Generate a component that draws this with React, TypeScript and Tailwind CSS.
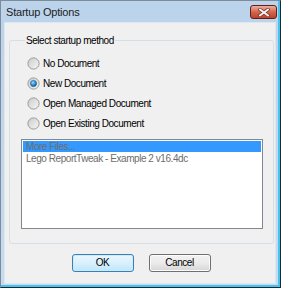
import React from "react";

const ui = "font-['Liberation_Sans',Arial,sans-serif] text-[10px] tracking-[-0.45px]";

function Radio({ checked }: { checked?: boolean }) {
  return (
    <svg width="13" height="13" viewBox="0 0 13 13" className="shrink-0">
      <defs>
        <linearGradient id="rbg" x1="0" y1="0" x2="1" y2="1">
          <stop offset="0" stopColor="#cbcbcb" />
          <stop offset="1" stopColor="#f7f7f7" />
        </linearGradient>
        <radialGradient id="rdot" cx="0.4" cy="0.35" r="0.75">
          <stop offset="0" stopColor="#9bdcff" />
          <stop offset="0.55" stopColor="#2a8bd3" />
          <stop offset="1" stopColor="#0c3d6b" />
        </radialGradient>
      </defs>
      <circle cx="6.5" cy="6.5" r="5.6" fill="url(#rbg)" stroke="#9a9a9a" strokeWidth="1" />
      {checked && <circle cx="6.5" cy="6.5" r="3.1" fill="url(#rdot)" stroke="#1d5a8a" strokeWidth="0.6" />}
    </svg>
  );
}

const options = [
  { label: "No Document" },
  { label: "New Document", checked: true },
  { label: "Open Managed Document" },
  { label: "Open Existing Document" },
];

export default function App() {
  return (
    <div className="w-[281px] h-[288px] border border-l-[#7e8c9a] border-t-[#7e8c9a] border-r-[#1f2830] border-b-[#1f2830]">
      <div className="h-full flex flex-col bg-gradient-to-b from-[#bcd3ec] to-[#c6dbf0] border-r-2 border-b-2 border-[#45c4ef]">
        {/* Title bar */}
        <div className="h-[21px] flex items-start justify-between pl-[5px] pr-[1px]">
          <span className="mt-[5px] text-[11px] leading-[13px] tracking-[-0.2px] text-[#1b1b1b] font-['Liberation_Sans',Arial,sans-serif]">Startup Options</span>
          <div className="mt-[4px] w-[27px] h-[14px] rounded-[3px] border border-[#5c2418] bg-gradient-to-b from-[#eab0a0] via-[#d3654c] to-[#c0432a] flex items-center justify-center">
            <svg width="12" height="9" viewBox="0 0 12 9">
              <path d="M2 1.5 L10 7.5 M10 1.5 L2 7.5" stroke="#7a3326" strokeWidth="3.4" strokeLinecap="square" />
              <path d="M2 1.5 L10 7.5 M10 1.5 L2 7.5" stroke="#f4f4f4" strokeWidth="1.9" strokeLinecap="square" />
            </svg>
          </div>
        </div>

        {/* Client area */}
        <div className={`flex-1 ml-[3px] mr-[2px] mb-[1px] bg-[#f0f0f0] border border-[#dde7f1] flex flex-col ${ui} text-black`}>
          <fieldset className="mt-[11px] ml-[4px] mr-[1px] border border-[#d5dfe5] rounded-[3px] px-[10px] pb-[14px]">
            <legend className="ml-[5px] px-[1px] leading-[13px]">Select startup method</legend>
            <div className="pt-[6px] flex flex-col">
              {options.map((o) => (
                <div key={o.label} className="h-[20px] flex items-center gap-[3px] pl-[7px]">
                  <Radio checked={o.checked} />
                  <span className="leading-[13px]">{o.label}</span>
                </div>
              ))}
            </div>
            <div className="mt-[6px] ml-[1px] h-[90px] bg-white border border-[#828790] p-[1px] text-[#6d6d6d]">
              <div className="h-[11px] bg-[#3399ff] leading-[12px] pl-[3px]">More Files...</div>
              <div className="h-[12px] leading-[13px] pl-[3px]">Lego ReportTweak - Example 2 v16.4dc</div>
            </div>
          </fieldset>

          <div className="mt-[10px] flex justify-center gap-[15px] pl-[2px]">
            <button className="w-[62px] h-[18px] rounded-[3px] border border-[#3c7fb1] bg-gradient-to-b from-[#eaf6fd] via-[#d9f0fc] to-[#bee6fd] leading-[16px] text-black shadow-[inset_0_0_0_1px_#c8ecfb]">
              OK
            </button>
            <button className="w-[62px] h-[18px] rounded-[3px] border border-[#707070] bg-gradient-to-b from-[#f2f2f2] via-[#ebebeb] to-[#d6d6d6] leading-[16px] text-black shadow-[inset_0_0_0_1px_#fcfcfc]">
              Cancel
            </button>
          </div>
        </div>
      </div>
    </div>
  );
}
